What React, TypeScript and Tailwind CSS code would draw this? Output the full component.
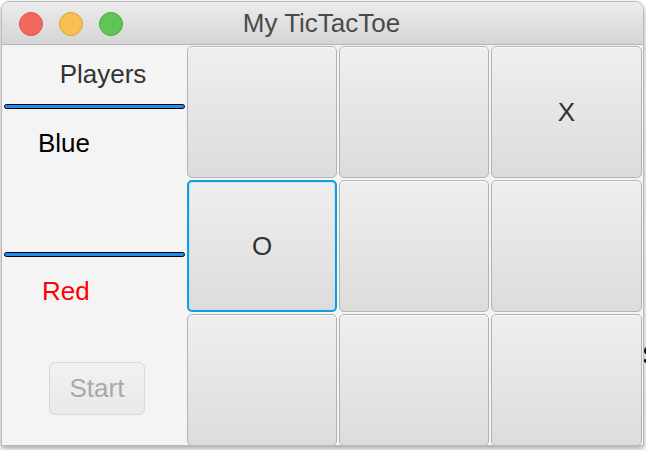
import React from "react";

const cells = ["", "", "X", "O", "", "", "", "", ""];

function Light({ fill, ring }: { fill: string; ring: string }) {
  return <span className={`block w-[24px] h-[24px] rounded-full border ${fill} ${ring}`} />;
}

function Separator() {
  return (
    <div className="mx-[2px] h-[5px] rounded-full border border-black bg-[#1e8ef0]" />
  );
}

export default function App() {
  return (
    <div
      className="relative w-[646px] h-[450px] bg-white overflow-hidden"
      style={{ fontFamily: '"Liberation Sans", Arial, sans-serif' }}
    >
      <span className="absolute left-[642px] top-[336px] text-[26px] text-black">S</span>

      <div className="relative ml-[1px] mt-[1px] w-[643px] h-[445px] flex flex-col rounded-t-[9px] border border-[#b9b9b9] bg-[#f4f4f4] shadow-[0_3px_6px_rgba(0,0,0,0.35)] overflow-hidden">
        {/* title bar */}
        <div className="relative h-[43px] shrink-0 flex items-center border-b border-[#b4b4b4] bg-gradient-to-b from-[#ececec] to-[#d5d5d5]">
          <div className="flex gap-[16px] pl-[17px] pt-[1px]">
            <Light fill="bg-[#f0685e]" ring="border-[#d9524a]" />
            <Light fill="bg-[#f6bf4f]" ring="border-[#d9a23f]" />
            <Light fill="bg-[#60c554]" ring="border-[#4ea63f]" />
          </div>
          <div className="absolute inset-0 flex items-center justify-center pr-[2px] text-[26px] text-[#4a4a4a]">
            My TicTacToe
          </div>
        </div>

        <div className="flex flex-1">
          {/* players panel */}
          <div className="w-[185px] flex flex-col">
            <div className="h-[59px] flex items-center justify-center pl-[17px] text-[26px] text-[#333333]">
              Players
            </div>
            <Separator />
            <div className="h-[143px] pl-[36px] pt-[19px] text-[26px] leading-[30px] text-black">Blue</div>
            <Separator />
            <div className="pl-[40px] pt-[19px] text-[26px] leading-[30px] text-[#ff0000]">Red</div>
            <button
              disabled
              className="mt-[56px] ml-[47px] w-[96px] h-[53px] rounded-[6px] border border-[#d8d8d8] bg-gradient-to-b from-[#f1f1f1] to-[#e9e9e9] text-[26px] text-[#a9a9a9]"
            >
              Start
            </button>
          </div>

          {/* board */}
          <div className="grid grid-cols-[150px_150px_151px] grid-rows-[132px_132px_132px] gap-[2px] pt-[1px]">
            {cells.map((c, i) => (
              <div
                key={i}
                className={
                  i === 3
                    ? "flex items-center justify-center rounded-[5px] border-2 border-[#129fd8] bg-gradient-to-b from-[#efefef] to-[#dcdcdc] shadow-[inset_0_0_0_1px_#bfe3f3] text-[26px] text-[#333333]"
                    : "flex items-center justify-center rounded-[5px] border border-[#b3b3b3] bg-gradient-to-b from-[#efefef] to-[#dcdcdc] shadow-[inset_0_1px_0_#fafafa] text-[26px] text-[#333333]"
                }
              >
                {c}
              </div>
            ))}
          </div>
        </div>
      </div>
    </div>
  );
}
